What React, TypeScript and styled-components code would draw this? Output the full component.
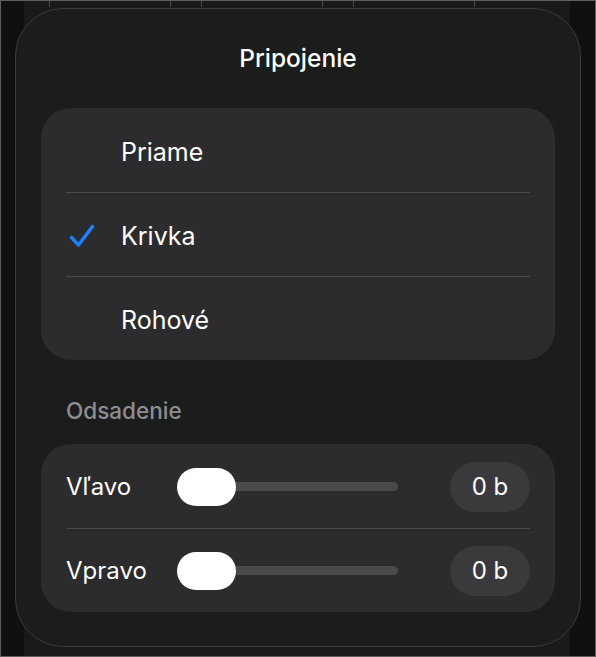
import { styled, createGlobalStyle } from "styled-components";

const Global = createGlobalStyle`
  html, body {
    margin: 0;
    padding: 0;
    background: #0f1010;
  }
  body {
    font-family: Inter, "Noto Sans", "Liberation Sans", sans-serif;
    -webkit-font-smoothing: antialiased;
  }
`;

const Frame = styled.div`
  position: relative;
  width: 596px;
  height: 657px;
  box-sizing: border-box;
  border: 1px solid #5e5e5e;
  background: #0f1010;
  overflow: hidden;
`;

// table peeking out behind the popover
const Backdrop = styled.div`
  position: absolute;
  left: 23px;
  right: 25px;
  top: 0;
  bottom: 0;
  background: #181919;
`;

const BackdropCells = styled.div`
  position: absolute;
  left: 0;
  right: 0;
  top: 0;
  height: 6px;
  display: flex;
`;

const Cell = styled.div<{ $w: number }>`
  width: ${(p) => p.$w}px;
  border-right: 1px solid #4a4a4a;
`;

const Panel = styled.div`
  position: relative;
  margin: 7px 0 0 14px;
  width: 566px;
  height: 639px;
  box-sizing: border-box;
  border: 1px solid #3a3b3b;
  border-radius: 48px;
  background: #1b1c1c;
  padding: 33px 25px 0 25px;
  display: flex;
  flex-direction: column;
  color: #fff;
`;

const Title = styled.div`
  height: 32px;
  line-height: 32px;
  text-align: center;
  font-size: 24.5px;
  font-weight: 500;
`;

const Card = styled.div<{ $top: number }>`
  margin-top: ${(p) => p.$top}px;
  background: #2c2c2e;
  border-radius: 30px;
  display: flex;
  flex-direction: column;
`;

const OptionRow = styled.div<{ $divider?: boolean }>`
  position: relative;
  height: 84px;
  box-sizing: border-box;
  padding-top: 3px;
  display: flex;
  align-items: center;
  &::before {
    content: "";
    display: ${(p) => (p.$divider ? "block" : "none")};
    position: absolute;
    top: 0;
    left: 25px;
    right: 25px;
    height: 1px;
    background: #4a4a4c;
  }
`;

const CheckSlot = styled.div`
  width: 80px;
  padding-left: 28px;
  box-sizing: border-box;
  display: flex;
  align-items: center;
`;

const OptionLabel = styled.span`
  font-size: 25px;
  font-weight: 400;
`;

const SectionLabel = styled.div`
  margin-top: 36px;
  padding-left: 25px;
  height: 30px;
  line-height: 30px;
  font-size: 22.5px;
  font-weight: 500;
  color: #8d8d92;
`;

const SliderRow = styled.div<{ $divider?: boolean }>`
  position: relative;
  height: 84px;
  box-sizing: border-box;
  padding: 1px 25px 0 26px;
  display: flex;
  align-items: center;
  &::before {
    content: "";
    display: ${(p) => (p.$divider ? "block" : "none")};
    position: absolute;
    top: 0;
    left: 26px;
    right: 25px;
    height: 1px;
    background: #4a4a4c;
  }
`;

const SliderLabel = styled.span`
  width: 111px;
  margin-left: -1px;
  font-size: 24px;
`;

const Track = styled.div`
  position: relative;
  width: 221px;
  height: 9px;
  border-radius: 5px;
  background: #4a4a4c;
`;

const Thumb = styled.div`
  position: absolute;
  left: 0;
  top: 50%;
  transform: translateY(-50%);
  width: 59px;
  height: 38px;
  border-radius: 19px;
  background: #fff;
`;

const ValuePill = styled.div`
  margin-left: auto;
  width: 80px;
  height: 50px;
  border-radius: 25px;
  background: #3a3a3c;
  display: flex;
  align-items: center;
  justify-content: center;
  font-size: 24px;
`;

const Check = () => (
  <svg width="26" height="26" viewBox="0 0 26 26" fill="none">
    <path
      d="M2.5 14.5 L9.5 22 L23.5 3.5"
      stroke="#1a84ff"
      strokeWidth="3.4"
      strokeLinecap="round"
      strokeLinejoin="round"
    />
  </svg>
);

const options = [
  { label: "Priame", checked: false },
  { label: "Krivka", checked: true },
  { label: "Rohové", checked: false },
];

const sliders = [
  { label: "Vľavo", value: "0 b" },
  { label: "Vpravo", value: "0 b" },
];

export default function App() {
  return (
    <>
      <Global />
      <Frame>
        <Backdrop>
          <BackdropCells>
            <Cell $w={25} />
            <Cell $w={120} />
            <Cell $w={30} />
            <Cell $w={120} />
            <Cell $w={30} />
            <Cell $w={120} />
          </BackdropCells>
        </Backdrop>
        <Panel>
          <Title>Pripojenie</Title>
          <Card $top={34}>
            {options.map((o, i) => (
              <OptionRow key={o.label} $divider={i > 0}>
                <CheckSlot>{o.checked && <Check />}</CheckSlot>
                <OptionLabel>{o.label}</OptionLabel>
              </OptionRow>
            ))}
          </Card>
          <SectionLabel>Odsadenie</SectionLabel>
          <Card $top={18}>
            {sliders.map((s, i) => (
              <SliderRow key={s.label} $divider={i > 0}>
                <SliderLabel>{s.label}</SliderLabel>
                <Track>
                  <Thumb />
                </Track>
                <ValuePill>{s.value}</ValuePill>
              </SliderRow>
            ))}
          </Card>
        </Panel>
      </Frame>
    </>
  );
}
